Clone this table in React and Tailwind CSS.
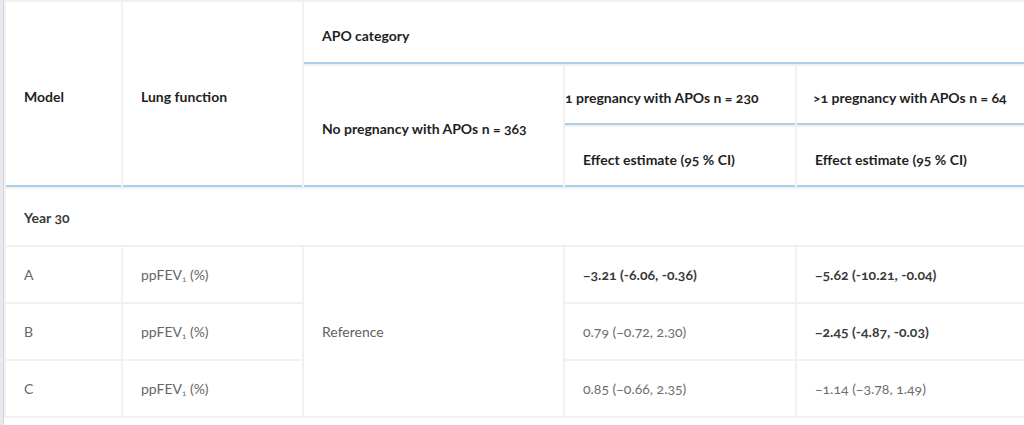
export default function App() {
    const font = { fontFamily: "Lato, 'Open Sans', sans-serif" };

    const rows = [
        { model: "A", est1: "−3.21 (-6.06, -0.36)", b1: true, est2: "−5.62 (-10.21, -0.04)", b2: true },
        { model: "B", est1: "0.79 (−0.72, 2.30)", b1: false, est2: "−2.45 (-4.87, -0.03)", b2: true },
        { model: "C", est1: "0.85 (−0.66, 2.35)", b1: false, est2: "−1.14 (−3.78, 1.49)", b2: false },
    ];

    const th = "bg-white text-left align-middle text-[14px] font-bold text-[#1f1f1f] px-[18px] pt-[6px] border-b-2 border-[#a8cfeb]";
    const td = "bg-white align-middle text-[14px] px-[18px] h-[55px]";

    return (
        <div className="w-[1024px] h-[425px] bg-white overflow-hidden flex oldstyle-nums" style={font}>
            <div className="w-[4px] shrink-0 bg-[#e8e8ee] border-r border-[#d6d6df]" />
            <div className="flex-1 overflow-hidden">
                <table className="table-fixed border-separate border-spacing-[2px] bg-[#f1f1f1] w-[1055px]">
                    <colgroup>
                        <col className="w-[115px]" />
                        <col className="w-[179px]" />
                        <col className="w-[259px]" />
                        <col className="w-[230px]" />
                        <col className="w-[260px]" />
                    </colgroup>
                    <thead>
                        <tr>
                            <th rowSpan={3} className={th}>Model</th>
                            <th rowSpan={3} className={th}>Lung function</th>
                            <th colSpan={3} className={`${th} h-[62px]`}>APO category</th>
                        </tr>
                        <tr>
                            <th rowSpan={2} className={th}>No pregnancy with APOs n = 363</th>
                            <th className={`${th} !px-0 h-[59px] whitespace-nowrap`}>1 pregnancy with APOs n = 230</th>
                            <th className={`${th} !pl-[16px] h-[59px] whitespace-nowrap`}>&gt;1 pregnancy with APOs n = 64</th>
                        </tr>
                        <tr>
                            <th className={`${th} h-[60px]`}>Effect estimate (95 % CI)</th>
                            <th className={`${th} h-[60px]`}>Effect estimate (95 % CI)</th>
                        </tr>
                    </thead>
                    <tbody>
                        <tr>
                            <td colSpan={5} className="bg-white h-[56px] px-[18px] text-[14px] font-bold text-[#3a3a3a]">Year 30</td>
                        </tr>
                        {rows.map((r, i) => (
                            <tr key={r.model}>
                                <td className={`${td} text-[#666]`}>{r.model}</td>
                                <td className={`${td} text-[#666]`}>
                                    ppFEV<sub className="text-[8px]">1</sub> (%)
                                </td>
                                {i === 0 && (
                                    <td rowSpan={3} className={`${td} text-[#5f5f5f]`}>Reference</td>
                                )}
                                <td className={`${td} ${r.b1 ? "font-bold text-[#3a3a3a]" : "text-[#6e6e6e]"}`}>{r.est1}</td>
                                <td className={`${td} ${r.b2 ? "font-bold text-[#3a3a3a]" : "text-[#6e6e6e]"}`}>{r.est2}</td>
                            </tr>
                        ))}
                    </tbody>
                </table>
            </div>
        </div>
    );
}
